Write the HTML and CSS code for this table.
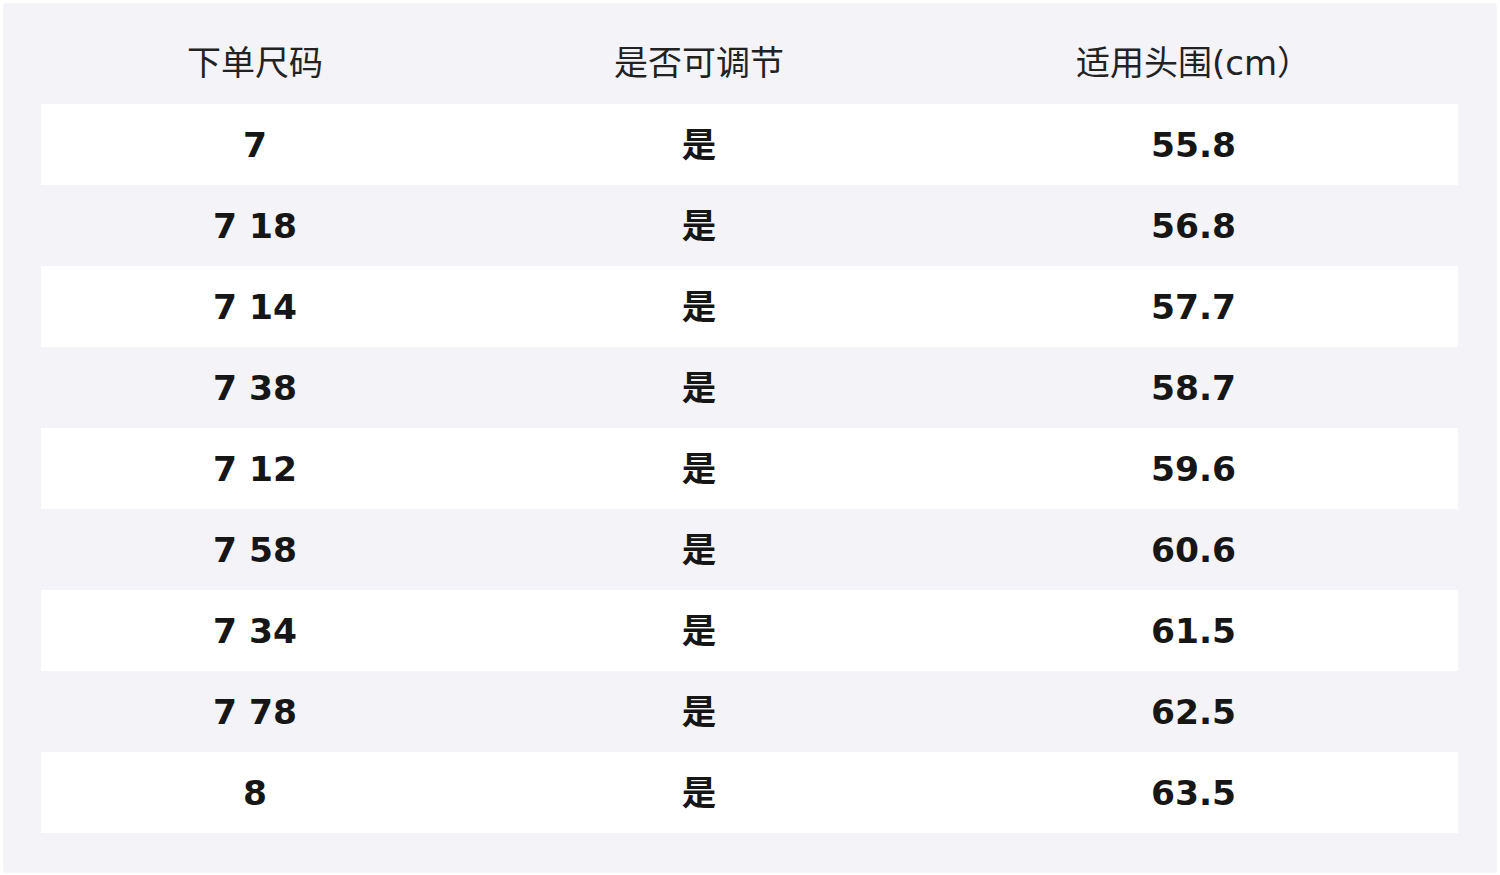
FILE: index.html
```html
<!DOCTYPE html>
<html lang="zh">
<head>
<meta charset="utf-8">
<link rel="stylesheet" href="styles.css">
</head>
<body>
<div class="panel">
  <div class="table">
    <div class="row head"><div>下单尺码</div><div>是否可调节</div><div>适用头围(cm）</div></div>
    <div class="row"><div>7</div><div>是</div><div>55.8</div></div>
    <div class="row"><div>7 18</div><div>是</div><div>56.8</div></div>
    <div class="row"><div>7 14</div><div>是</div><div>57.7</div></div>
    <div class="row"><div>7 38</div><div>是</div><div>58.7</div></div>
    <div class="row"><div>7 12</div><div>是</div><div>59.6</div></div>
    <div class="row"><div>7 58</div><div>是</div><div>60.6</div></div>
    <div class="row"><div>7 34</div><div>是</div><div>61.5</div></div>
    <div class="row"><div>7 78</div><div>是</div><div>62.5</div></div>
    <div class="row"><div>8</div><div>是</div><div>63.5</div></div>
  </div>
</div>
</body>
</html>
```
FILE: styles.css
```css
html, body {
  margin: 0;
  padding: 0;
  background: #ffffff;
}
body {
  padding: 3px;
  font-family: "DejaVu Sans", "Noto Sans CJK SC", sans-serif;
  color: #161616;
}
.panel {
  width: 1494px;
  height: 870px;
  box-sizing: border-box;
  background: #f3f3f8;
  border-radius: 4px;
  padding: 0 39px 0 38px;
}
.table {
  display: flex;
  flex-direction: column;
}
.row {
  display: grid;
  grid-template-columns: 428px 460px 1fr;
  height: 81px;
  align-items: center;
  font-size: 34.5px;
  font-weight: bold;
  line-height: 40px;
}
.row > div {
  text-align: center;
}
.row:nth-child(even) {
  background: #ffffff;
}
.row.head {
  height: 101px;
  box-sizing: border-box;
  align-items: start;
  padding-top: 40px;
  font-size: 34px;
  font-weight: normal;
  color: #222222;
}
```
